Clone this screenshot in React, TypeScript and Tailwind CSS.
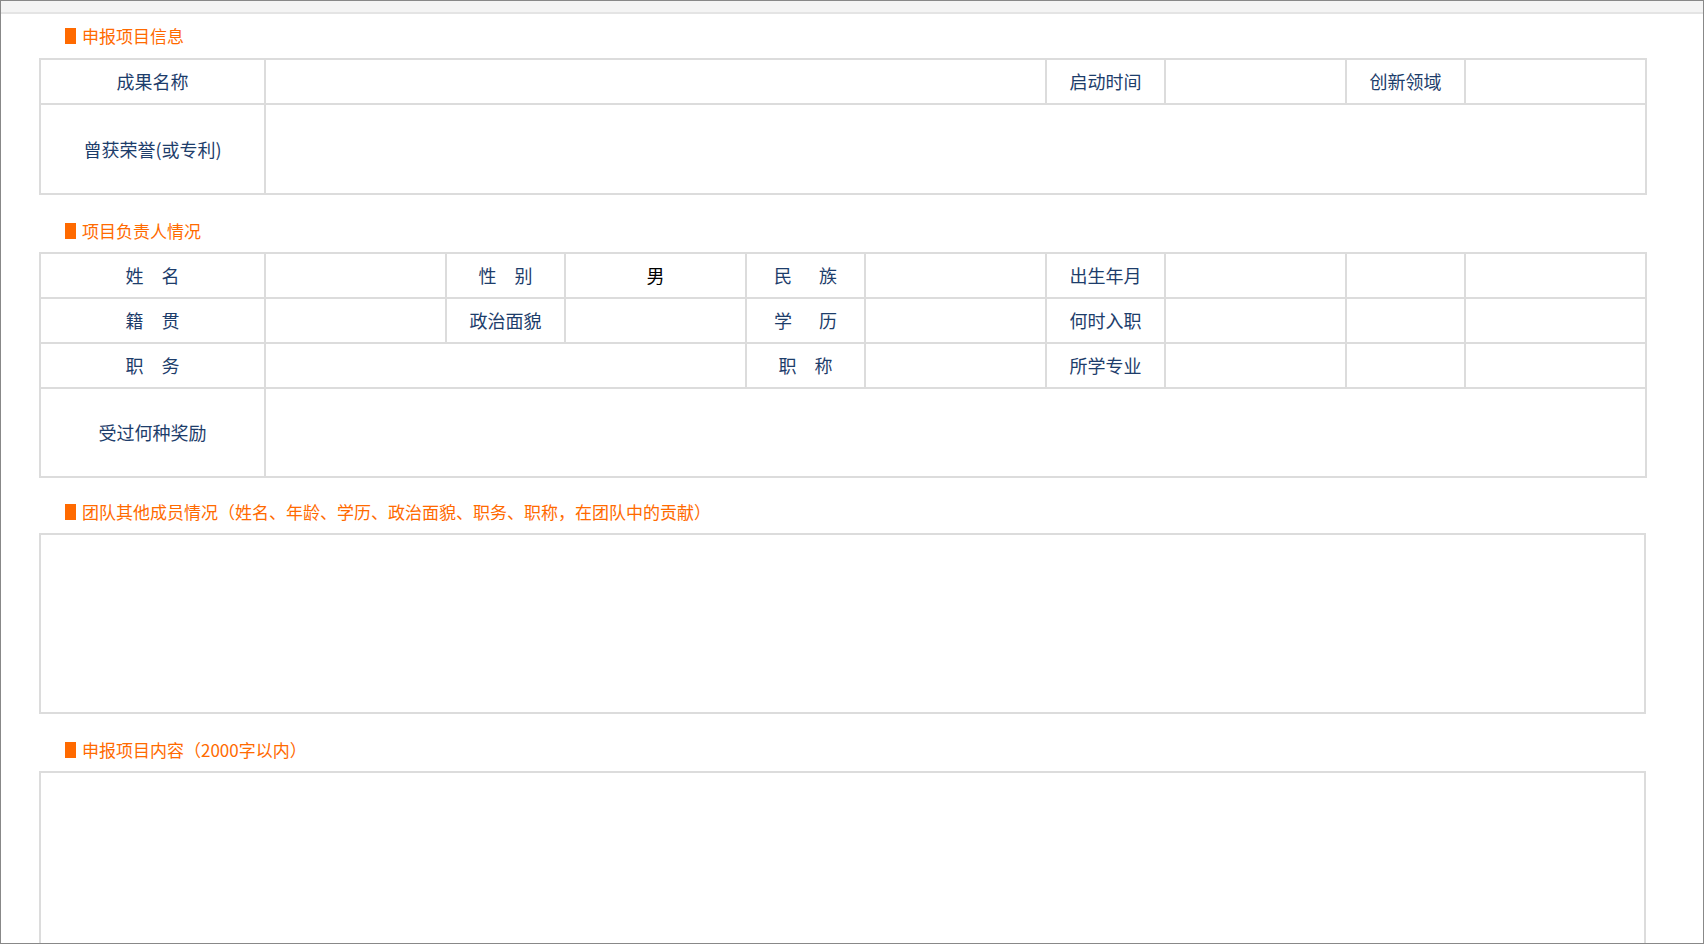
import React from "react";

const font = { fontFamily: '"SimSun","Noto Sans CJK SC",sans-serif' };

function Title({ children }: { children: React.ReactNode }) {
    return (
        <div className="flex items-center h-[24px] pl-[26px] text-[17px] text-[#ff6a00]">
            <span className="w-[11px] h-[16px] bg-[#ff6a00] mr-[6px]" />
            {children}
        </div>
    );
}

const td = "border-2 border-[#dcdcdc] text-center text-[18px] text-[#1d3d6b]";
const widths = [225, 181, 119, 181, 119, 181, 119, 181, 119, 181];

function Cols() {
    return (
        <colgroup>
            {widths.map((w, i) => (
                <col key={i} style={{ width: w }} />
            ))}
        </colgroup>
    );
}

export default function App() {
    return (
        <div className="w-[1704px] h-[944px] border border-[#888] bg-white overflow-hidden" style={font}>
            <div className="h-[13px] bg-[#f4f4f4] border-b-2 border-[#e4e4e4]" />
            <div className="pl-[38px] pr-[58px]">
                <div className="pt-[10px]">
                    <Title>申报项目信息</Title>
                </div>
                <table className="mt-[10px] w-[1607px] border-collapse table-fixed">
                    <Cols />
                    <tbody>
                        <tr className="h-[45px]">
                            <td className={td}>成果名称</td>
                            <td className={td} colSpan={5}></td>
                            <td className={td}>启动时间</td>
                            <td className={td}></td>
                            <td className={td}>创新领域</td>
                            <td className={td}></td>
                        </tr>
                        <tr className="h-[90px]">
                            <td className={td}>曾获荣誉(或专利)</td>
                            <td className={td} colSpan={9}></td>
                        </tr>
                    </tbody>
                </table>
                <div className="mt-[24px]">
                    <Title>项目负责人情况</Title>
                </div>
                <table className="mt-[9px] w-[1607px] border-collapse table-fixed">
                    <Cols />
                    <tbody>
                        <tr className="h-[45px]">
                            <td className={td}>姓&emsp;名</td>
                            <td className={td}></td>
                            <td className={td}>性&emsp;别</td>
                            <td className={td + " text-black"}>男</td>
                            <td className={td}>民&emsp;&ensp;族</td>
                            <td className={td}></td>
                            <td className={td}>出生年月</td>
                            <td className={td}></td>
                            <td className={td}></td>
                            <td className={td}></td>
                        </tr>
                        <tr className="h-[45px]">
                            <td className={td}>籍&emsp;贯</td>
                            <td className={td}></td>
                            <td className={td}>政治面貌</td>
                            <td className={td}></td>
                            <td className={td}>学&emsp;&ensp;历</td>
                            <td className={td}></td>
                            <td className={td}>何时入职</td>
                            <td className={td}></td>
                            <td className={td}></td>
                            <td className={td}></td>
                        </tr>
                        <tr className="h-[45px]">
                            <td className={td}>职&emsp;务</td>
                            <td className={td} colSpan={3}></td>
                            <td className={td}>职&emsp;称</td>
                            <td className={td}></td>
                            <td className={td}>所学专业</td>
                            <td className={td}></td>
                            <td className={td}></td>
                            <td className={td}></td>
                        </tr>
                        <tr className="h-[89px]">
                            <td className={td}>受过何种奖励</td>
                            <td className={td} colSpan={9}></td>
                        </tr>
                    </tbody>
                </table>
                <div className="mt-[22px]">
                    <Title>团队其他成员情况（姓名、年龄、学历、政治面貌、职务、职称，在团队中的贡献）</Title>
                </div>
                <div className="mt-[9px] w-[1607px] h-[181px] border-2 border-[#dcdcdc]" />
                <div className="mt-[24px]">
                    <Title>申报项目内容（2000字以内）</Title>
                </div>
                <div className="mt-[9px] w-[1607px] h-[200px] border-2 border-[#dcdcdc]" />
            </div>
        </div>
    );
}
